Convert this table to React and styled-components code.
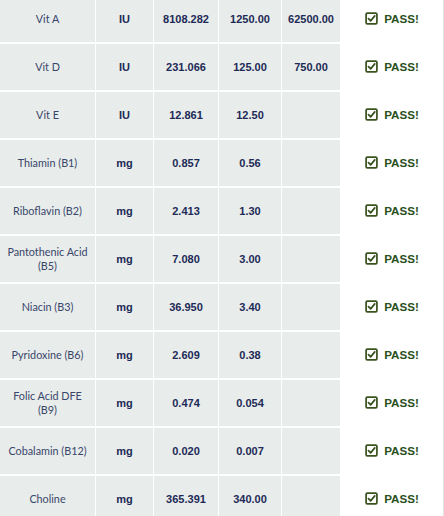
import React from "react";
import styled, { createGlobalStyle } from "styled-components";

const Global = createGlobalStyle`
  html, body { margin: 0; padding: 0; background: #ffffff; overflow: hidden; }
  body { font-family: "Liberation Sans", Arial, sans-serif; }
`;

const Table = styled.div`
  display: grid;
  grid-template-columns: 95px 57px 64px 62px 58px 1fr;
  column-gap: 1px;
  row-gap: 2px;
  width: 444px;
  box-sizing: border-box;
  margin-top: -4px;
  background: #ffffff;
  border-right: 1px solid #e2e5e4;
`;

const Cell = styled.div`
  height: 46px;
  background: #e8ecea;
  display: flex;
  align-items: center;
  justify-content: center;
  text-align: center;
  box-sizing: border-box;
  padding: 0 4px;
`;

const Label = styled(Cell)`
  font-family: "Lato", "Liberation Sans", sans-serif;
  font-size: 10.8px;
  line-height: 14.5px;
  color: #38466a;
  padding: 0 5px;
`;

const Value = styled(Cell)`
  font-family: "Liberation Sans", Arial, sans-serif;
  font-weight: bold;
  font-size: 11px;
  color: #1d2a57;
`;

const Status = styled.div`
  height: 46px;
  background: #ffffff;
  display: flex;
  align-items: center;
  justify-content: center;
  gap: 6px;
  padding-bottom: 2px;
  box-sizing: border-box;
  font-family: "Liberation Sans", Arial, sans-serif;
  font-weight: bold;
  font-size: 11.6px;
  color: #2b4f1c;
`;

const CheckBox = () => (
  <svg width="13" height="13" viewBox="0 0 12 12">
    <rect x="1" y="1" width="10" height="10" rx="1.2" fill="none" stroke="#3a5420" strokeWidth="1.6" />
    <path d="M3.2 6.2 L5.2 8.2 L9 3.6" fill="none" stroke="#3a5420" strokeWidth="1.6" strokeLinecap="round" strokeLinejoin="round" />
  </svg>
);

const rows = [
  ["Vit A", "IU", "8108.282", "1250.00", "62500.00"],
  ["Vit D", "IU", "231.066", "125.00", "750.00"],
  ["Vit E", "IU", "12.861", "12.50", ""],
  ["Thiamin (B1)", "mg", "0.857", "0.56", ""],
  ["Riboflavin (B2)", "mg", "2.413", "1.30", ""],
  ["Pantothenic Acid (B5)", "mg", "7.080", "3.00", ""],
  ["Niacin (B3)", "mg", "36.950", "3.40", ""],
  ["Pyridoxine (B6)", "mg", "2.609", "0.38", ""],
  ["Folic Acid DFE (B9)", "mg", "0.474", "0.054", ""],
  ["Cobalamin (B12)", "mg", "0.020", "0.007", ""],
  ["Choline", "mg", "365.391", "340.00", ""],
];

export default function App() {
  return (
    <>
      <Global />
      <Table>
        {rows.map((r) => (
          <React.Fragment key={r[0]}>
            <Label>{r[0]}</Label>
            <Value>{r[1]}</Value>
            <Value>{r[2]}</Value>
            <Value>{r[3]}</Value>
            <Value>{r[4]}</Value>
            <Status>
              <CheckBox />
              <span>PASS!</span>
            </Status>
          </React.Fragment>
        ))}
      </Table>
    </>
  );
}
